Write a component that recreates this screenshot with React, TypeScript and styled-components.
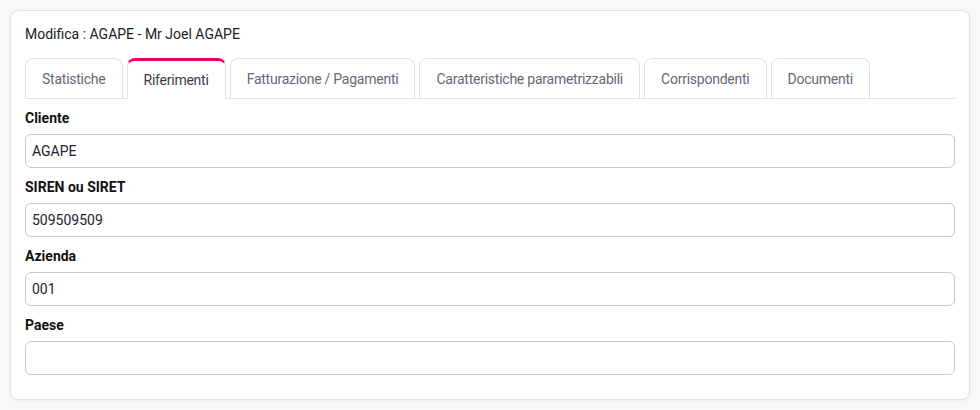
import React from "react";
import styled, { createGlobalStyle } from "styled-components";

const Global = createGlobalStyle`
  html, body { margin: 0; padding: 0; background: #f8f8f9; }
  body { font-family: Roboto, "Liberation Sans", Arial, sans-serif; font-size: 14px; color: #212529; }
  * { box-sizing: border-box; }
`;

const Page = styled.div`
  padding: 10px;
  width: 980px;
`;

const Card = styled.div`
  background: #fff;
  border: 1px solid #e2e2e4;
  border-radius: 8px;
  box-shadow: 0 1px 4px rgba(0, 0, 0, 0.05);
  padding: 13px 14px 15px 14px;
`;

const Title = styled.div`
  font-size: 14px;
  line-height: 20px;
  color: #212121;
  margin-bottom: 14px;
`;

const Tabs = styled.div`
  display: flex;
  gap: 4px;
  border-bottom: 1px solid #dee2e6;
  height: 41px;
`;

const Tab = styled.div<{ $active?: boolean }>`
  height: 41px;
  padding: 0 16px;
  display: flex;
  align-items: center;
  justify-content: center;
  font-size: 14px;
  letter-spacing: -0.24px;
  color: ${(p) => (p.$active ? "#3d3d4a" : "#676777")};
  background: #fff;
  border: 1px solid #dee2e6;
  border-top: ${(p) => (p.$active ? "3px solid #e5006d" : "1px solid #dee2e6")};
  border-bottom: ${(p) => (p.$active ? "1px solid #fff" : "1px solid #dee2e6")};
  border-radius: 8px 8px 0 0;
  white-space: nowrap;
`;

const Form = styled.div`
  padding-top: 9px;
`;

const Group = styled.div`
  margin-bottom: 9px;
`;

const Label = styled.div`
  font-weight: 700;
  font-size: 14px;
  line-height: 20px;
  color: #111;
  margin-bottom: 6px;
`;

const Input = styled.div`
  height: 34px;
  border: 1px solid #c9cad0;
  border-radius: 6px;
  padding: 0 6px;
  display: flex;
  align-items: center;
  font-size: 14px;
  color: #212529;
`;

const tabs = [
  "Statistiche",
  "Riferimenti",
  "Fatturazione / Pagamenti",
  "Caratteristiche parametrizzabili",
  "Corrispondenti",
  "Documenti",
];

const fields = [
  { label: "Cliente", value: "AGAPE" },
  { label: "SIREN ou SIRET", value: "509509509" },
  { label: "Azienda", value: "001" },
  { label: "Paese", value: "" },
];

export default function App() {
  return (
    <>
      <Global />
      <Page>
        <Card>
          <Title>Modifica : AGAPE - Mr Joel AGAPE</Title>
          <Tabs>
            {tabs.map((t) => (
              <Tab key={t} $active={t === "Riferimenti"}>
                {t}
              </Tab>
            ))}
          </Tabs>
          <Form>
            {fields.map((f) => (
              <Group key={f.label}>
                <Label>{f.label}</Label>
                <Input>{f.value}</Input>
              </Group>
            ))}
          </Form>
        </Card>
      </Page>
    </>
  );
}
